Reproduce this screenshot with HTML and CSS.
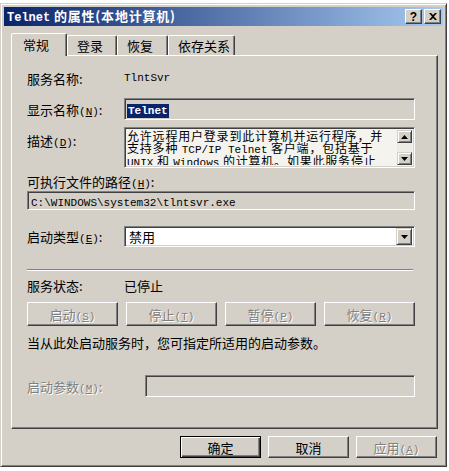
FILE: index.html
```html
<!DOCTYPE html>
<html>
<head>
  <title>Telnet 的属性(本地计算机)</title>
  <link rel="stylesheet" href="styles.css">
</head>
<body>

  <div class="window">
    <div class="titlebar">
      <span class="title"><span class="en">Telnet</span> 的属性(本地计算机)</span>
      <div class="tb-buttons">
        <span class="tb-btn">?</span>
        <span class="tb-btn">
          <svg width="8" height="7" viewBox="0 0 8 7"><path d="M0 0h2l2 2 2-2h2L5 3.5 8 7H6L4 5 2 7H0l3-3.5z" fill="#000"/></svg>
        </span>
      </div>
    </div>

    <div class="dialog-body">
      <!-- Tab strip -->
      <div class="tabs">
        <div class="tab active">常规</div>
        <div class="tab">登录</div>
        <div class="tab">恢复</div>
        <div class="tab">依存关系</div>
      </div>

      <div class="panel">
        <div class="row row-name">
          <span class="label">服务名称:</span>
          <span class="en">TlntSvr</span>
        </div>

        <div class="row row-display">
          <span class="label">显示名称<span class="en">(<u>N</u>)</span>:</span>
          <div class="field readonly"><span class="selected en">Telnet</span></div>
        </div>

        <div class="row row-desc">
          <span class="label">描述<span class="en">(<u>D</u>)</span>:</span>
          <div class="field desc">
            <div class="desc-text">
              <div class="desc-line">允许远程用户登录到此计算机并运行程序，并</div>
              <div class="desc-line">支持多种 <span class="en">TCP/IP Telnet</span> 客户端，包括基于</div>
              <div class="desc-line"><span class="en">UNIX</span> 和 <span class="en">Windows</span> 的计算机。如果此服务停止</div>
            </div>
            <div class="scrollbar">
              <span class="sb-btn"><svg width="7" height="4" viewBox="0 0 7 4"><path d="M3.5 0L7 4H0z" fill="#000"/></svg></span>
              <span class="sb-track"></span>
              <span class="sb-btn"><svg width="7" height="4" viewBox="0 0 7 4"><path d="M0 0h7L3.5 4z" fill="#000"/></svg></span>
            </div>
          </div>
        </div>

        <div class="path-label">可执行文件的路径<span class="en">(<u>H</u>)</span>:</div>
        <div class="field path"><span class="en">C:\WINDOWS\system32\tlntsvr.exe</span></div>

        <div class="row row-start">
          <span class="label">启动类型<span class="en">(<u>E</u>)</span>:</span>
          <div class="field combo">
            <span class="combo-value">禁用</span>
            <span class="sb-btn drop"><svg width="7" height="4" viewBox="0 0 7 4"><path d="M0 0h7L3.5 4z" fill="#000"/></svg></span>
          </div>
        </div>

        <div class="separator"></div>

        <div class="row row-status">
          <span class="label">服务状态:</span>
          <span>已停止</span>
        </div>

        <div class="service-buttons">
          <button class="btn" disabled>启动<span class="en">(<u>S</u>)</span></button>
          <button class="btn" disabled>停止<span class="en">(<u>T</u>)</span></button>
          <button class="btn" disabled>暂停<span class="en">(<u>P</u>)</span></button>
          <button class="btn" disabled>恢复<span class="en">(<u>R</u>)</span></button>
        </div>

        <div class="hint">当从此处启动服务时，您可指定所适用的启动参数。</div>

        <div class="row row-param">
          <span class="label disabled-text">启动参数<span class="en">(<u>M</u>)</span>:</span>
          <div class="field param"></div>
        </div>
      </div>

      <div class="actions">
        <button class="btn default">确定</button>
        <button class="btn">取消</button>
        <button class="btn" disabled>应用<span class="en">(<u>A</u>)</span></button>
      </div>
    </div>
  </div>

</body>
</html>
```

FILE: styles.css
```css
* {
  box-sizing: border-box;
}

html {
  background-color: #ffffff;
}

body {
  margin: 0;
  padding-top: 3px;
  font-family: "Noto Sans CJK SC", "Noto Sans", sans-serif;
  font-size: 13px;
  color: #000;
}

.en {
  font-family: "Liberation Mono", "Noto Sans CJK SC", monospace;
  font-size: 11px;
}

/* Window frame */
.window {
  width: 447px;
  background-color: #d4d0c8;
  border: 1px solid;
  border-color: #d4d0c8 #404040 #404040 #d4d0c8;
  box-shadow: inset 1px 1px #ffffff, inset -1px -1px #808080;
  padding: 3px;
}

.titlebar {
  height: 19px;
  display: flex;
  align-items: center;
  justify-content: space-between;
  padding: 0 2px 0 3px;
  background: linear-gradient(to right, #0a246a, #a6caf0);
  color: #fff;
  font-weight: bold;
}

.title {
  line-height: 19px;
  white-space: nowrap;
  letter-spacing: 0.8px;
}

.title .en {
  font-size: 12px;
  font-weight: bold;
  letter-spacing: 0;
}

.tb-buttons {
  display: flex;
  gap: 2px;
}

.tb-btn {
  width: 17px;
  height: 15px;
  display: flex;
  align-items: center;
  justify-content: center;
  background-color: #d4d0c8;
  border: 1px solid;
  border-color: #fff #404040 #404040 #fff;
  box-shadow: inset -1px -1px #808080;
  color: #000;
  font-family: "Liberation Sans", sans-serif;
  font-size: 12px;
  font-weight: bold;
  line-height: 1;
}

.dialog-body {
  padding: 7px 5px 5px 7px;
}

/* Tabs */
.tabs {
  display: flex;
  align-items: flex-end;
  height: 22px;
}

.tab {
  height: 20px;
  line-height: 19px;
  padding: 0 9px;
  border: 1px solid;
  border-bottom: none;
  border-color: #fff #404040 transparent #fff;
  box-shadow: inset -1px 0 #808080;
  border-radius: 2px 2px 0 0;
  white-space: nowrap;
}

.tab:nth-child(1) { width: 56px; }
.tab:nth-child(2) { width: 50px; }
.tab:nth-child(3) { width: 51px; }
.tab:nth-child(4) { width: 67px; }

.tab.active {
  height: 23px;
  margin-bottom: -1px;
  line-height: 22px;
  padding-left: 11px;
  background-color: #d4d0c8;
  position: relative;
  z-index: 1;
}

/* Tab page */
.panel {
  height: 374px;
  border: 1px solid;
  border-color: #fff #404040 #404040 #fff;
  box-shadow: inset -1px -1px #808080;
  padding: 12px 22px 0 15px;
}

.row {
  display: flex;
  align-items: center;
}

.label {
  width: 97px;
  flex: none;
  white-space: nowrap;
}

.row-name {
  height: 20px;
}

.field {
  flex: 1;
  border: 1px solid;
  border-color: #808080 #fff #fff #808080;
  box-shadow: inset 1px 1px #404040, inset -1px -1px #d4d0c8;
}

.readonly {
  height: 22px;
  padding: 3px 2px;
  line-height: 14px;
}

.selected {
  background-color: #0a246a;
  color: #fff;
  font-weight: bold;
  padding: 1px 1px;
}

.row-display {
  margin-top: 10px;
}

.row-desc {
  margin-top: 7px;
  align-items: flex-start;
}

.row-desc .label {
  padding-top: 4px;
}

.desc {
  height: 41px;
  display: flex;
  background-color: #f4f3ee;
  padding: 2px;
}

.desc-text {
  flex: 1;
  font-size: 12px;
  letter-spacing: 0.8px;
  white-space: nowrap;
  overflow: hidden;
}

.desc-line {
  height: 12.4px;
  line-height: 12.4px;
}

.desc-line .en {
  font-size: 11px;
  line-height: 12px;
  letter-spacing: 0;
}

.scrollbar {
  width: 15px;
  display: flex;
  flex-direction: column;
}

.sb-track {
  flex: 1;
  background-color: #ecebe6;
}

.sb-btn {
  width: 15px;
  height: 13px;
  display: flex;
  align-items: center;
  justify-content: center;
  background-color: #d4d0c8;
  border: 1px solid;
  border-color: #d4d0c8 #404040 #404040 #d4d0c8;
  box-shadow: inset 1px 1px #fff, inset -1px -1px #808080;
}

.path-label {
  margin-top: 6px;
  height: 16px;
  line-height: 16px;
}

.path {
  margin-top: 1px;
  height: 19px;
  padding: 0 3px;
  line-height: 17px;
}

.row-start {
  margin-top: 16px;
}

.combo {
  height: 21px;
  display: flex;
  align-items: center;
  justify-content: space-between;
  background-color: #fff;
  padding: 2px;
}

.combo-value {
  padding-left: 2px;
}

.sb-btn.drop {
  width: 16px;
  height: 17px;
}

.separator {
  margin-top: 22px;
  height: 2px;
  border-top: 1px solid #808080;
  border-bottom: 1px solid #fff;
  margin-right: 2px;
}

.row-status {
  margin-top: 6px;
  height: 16px;
}

/* Buttons */
.btn {
  height: 24px;
  font-family: inherit;
  font-size: 13px;
  color: #000;
  background-color: #d4d0c8;
  border: 1px solid;
  border-color: #fff #404040 #404040 #fff;
  box-shadow: inset -1px -1px #808080;
  padding: 0;
}

.btn:disabled,
.disabled-text {
  color: #808080;
  text-shadow: 1px 1px #fff;
}

.service-buttons {
  margin-top: 9px;
  display: grid;
  grid-template-columns: repeat(4, 1fr);
  gap: 8px;
}

.hint {
  margin-top: 9px;
  height: 16px;
  line-height: 16px;
}

.row-param {
  margin-top: 24px;
}

.row-param .label {
  width: 118px;
}

.param {
  height: 22px;
}

.actions {
  margin-top: 7px;
  display: flex;
  justify-content: flex-end;
  gap: 7px;
  padding-right: 1px;
}

.actions .btn {
  width: 81px;
  height: 22px;
}

.btn.default {
  border-color: #000;
  box-shadow: inset 1px 1px #fff, inset -1px -1px #404040, inset -2px -2px #808080;
}
```
